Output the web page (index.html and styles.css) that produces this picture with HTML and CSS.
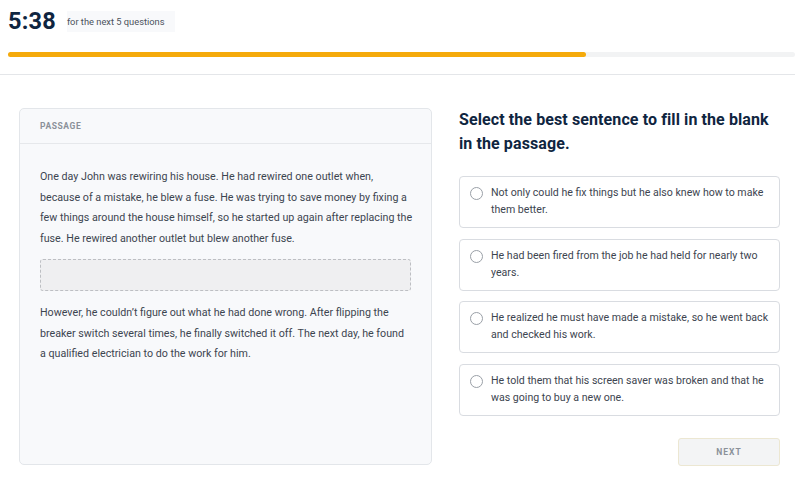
FILE: index.html
```html
<!DOCTYPE html>
<html>
<head>
<meta charset="utf-8">
<link rel="stylesheet" href="styles.css">
</head>
<body>
<header class="top">
  <div class="timer-row">
    <span class="timer">5:38</span>
    <span class="timer-note">for the next 5 questions</span>
  </div>
  <div class="progress"><div class="progress-fill" style="width:73.5%"></div></div>
</header>
<main class="main">
  <section class="passage">
    <div class="passage-head">PASSAGE</div>
    <div class="passage-body">
      <p>One day John was rewiring his house. He had rewired one outlet when, because of a mistake, he blew a fuse. He was trying to save money by fixing a few things around the house himself, so he started up again after replacing the fuse. He rewired another outlet but blew another fuse.</p>
      <div class="blank"></div>
      <p>However, he couldn’t figure out what he had done wrong. After flipping the breaker switch several times, he finally switched it off. The next day, he found a&nbsp;qualified electrician to do the work for him.</p>
    </div>
  </section>
  <section class="question">
    <h1 class="prompt">Select the best sentence to fill in the blank in the passage.</h1>
    <div class="options">
      <label class="option"><span class="radio"></span><span class="opt-text">Not only could he fix things but he also knew how to make them better.</span></label>
      <label class="option"><span class="radio"></span><span class="opt-text">He had been fired from the job he had held for nearly two years.</span></label>
      <label class="option"><span class="radio"></span><span class="opt-text">He realized he must have made a mistake, so he went back and checked his work.</span></label>
      <label class="option"><span class="radio"></span><span class="opt-text">He told them that his screen saver was broken and that he was going to buy a new one.</span></label>
    </div>
    <div class="actions"><button class="next">NEXT</button></div>
  </section>
</main>
</body>
</html>
```
FILE: styles.css
```css
* { box-sizing: border-box; }
html, body { margin: 0; padding: 0; background: #fff; }
body { font-family: Roboto, "Liberation Sans", sans-serif; color: #3c4450; width: 795px; height: 478px; overflow: hidden; }

.top { padding: 6px 0 0 8px; border-bottom: 1px solid #e4e6e9; height: 75px; }
.timer-row { display: flex; align-items: center; height: 30px; }
.timer { font-size: 23.5px; font-weight: 700; color: #0f2540; letter-spacing: 0.2px; }
.timer-note { margin-left: 11px; font-size: 9.3px; color: #4b525c; background: #f8f9fb; padding: 5px 10px 5px 0; }
.progress { margin-top: 16px; height: 5px; background: #f2f3f4; border-radius: 3px; }
.progress-fill { height: 5px; background: #f5aa0b; border-radius: 3px; }

.main { display: flex; padding: 33px 15px 0 19px; gap: 27px; }
.passage { width: 413px; height: 357px; background: #f8f9fb; border: 1px solid #e3e6ea; border-radius: 5px; }
.passage-head { height: 35px; padding: 12px 0 0 20px; font-size: 8.5px; font-weight: 700; letter-spacing: 0.6px; color: #8b9199; border-bottom: 1px solid #e6e8eb; }
.passage-body { padding: 23px 18px 0 20px; }
.passage-body p { margin: 0; font-size: 10.7px; line-height: 20.7px; color: #3d4550; }
.blank { height: 32px; margin: 9px 2px 12px 0; border: 1px dashed #bdbfc3; border-radius: 3px; background: #efeff1; }

.question { width: 321px; }
.prompt { margin: 0; font-size: 16px; line-height: 24px; font-weight: 700; color: #0f2540; letter-spacing: 0.1px; }
.options { margin-top: 20px; display: flex; flex-direction: column; gap: 10.7px; }
.option { display: flex; align-items: flex-start; height: 52px; border: 1px solid #d9dce1; border-radius: 4px; padding: 7px 10px 0 10px; background: #fff; }
.radio { flex: none; width: 13px; height: 13px; border: 1px solid #9aa0a7; border-radius: 50%; margin: 3px 8px 0 0; }
.opt-text { font-size: 10.6px; line-height: 17px; color: #3d4550; }
.actions { display: flex; justify-content: flex-end; margin-top: 22px; }
.next { width: 102px; height: 28px; border: 1px solid #ece7d2; border-radius: 3px; background: #f3f4f5; font-family: inherit; font-size: 8.5px; font-weight: 700; letter-spacing: 1px; color: #8b9199; padding: 0; }
```
